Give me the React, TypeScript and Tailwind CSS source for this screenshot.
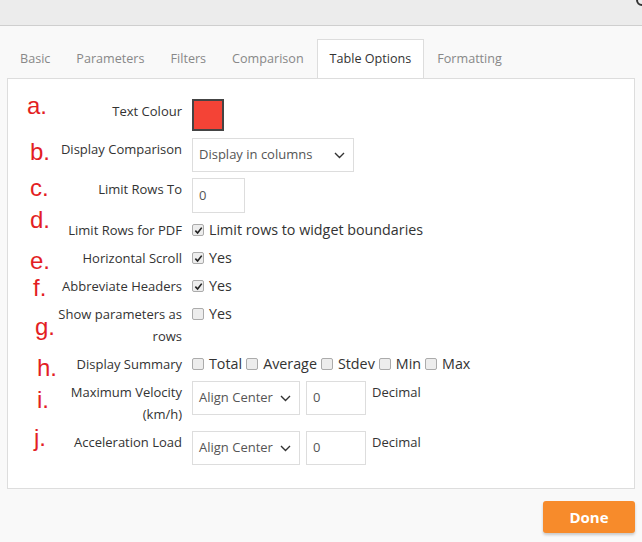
import React from "react";

const Check = ({ checked }: { checked?: boolean }) => (
  <span className="w-[12px] h-[12px] shrink-0 border border-[#ababab] rounded-[2px] bg-[#ededed] flex items-center justify-center">
    {checked && (
      <svg width="9" height="9" viewBox="0 0 10 10">
        <path d="M1.5 5.2 L4 7.8 L8.6 1.8" fill="none" stroke="#222" strokeWidth="1.8" />
      </svg>
    )}
  </span>
);

const Chevron = () => (
  <svg width="11" height="7" viewBox="0 0 11 7">
    <path d="M1 1 L5.5 5.5 L10 1" fill="none" stroke="#333" strokeWidth="1.4" />
  </svg>
);

const Letter = ({ ch, top, left }: { ch: string; top: number; left: number }) => (
  <span
    className="absolute text-[24px] leading-none text-[#e31e24] font-['Liberation_Sans',sans-serif]"
    style={{ top, left }}
  >
    {ch}
  </span>
);

const Row = ({
  letter,
  lTop,
  lLeft,
  label,
  h,
  children,
}: {
  letter: string;
  lTop: number;
  lLeft: number;
  label: React.ReactNode;
  h: string;
  children: React.ReactNode;
}) => (
  <div className={`flex ${h}`}>
    <div className="w-[44px] relative shrink-0">
      <Letter ch={letter} top={lTop} left={lLeft} />
    </div>
    <div className="w-[130px] shrink-0 text-right text-[13px] leading-[22px] text-[#333]">{label}</div>
    <div className="ml-[10px] flex items-start">{children}</div>
  </div>
);

const CheckText = ({ checked, text }: { checked?: boolean; text: string }) => (
  <span className="flex items-center h-[22px]">
    <Check checked={checked} />
    <span className="ml-[5px] text-[14.3px] text-[#333]">{text}</span>
  </span>
);

const AlignSelect = () => (
  <div className="flex items-start">
    <div className="w-[108px] h-[34px] border border-[#ddd] bg-white flex items-center justify-between pl-[6px] pr-[8px] text-[13px] text-[#555]">
      <span>Align Center</span>
      <Chevron />
    </div>
    <div className="ml-[6px] w-[60px] h-[34px] border border-[#ddd] bg-white flex items-center pl-[6px] text-[13px] text-[#555]">0</div>
    <div className="ml-[6px] text-[13px] leading-[22px] text-[#333]">Decimal</div>
  </div>
);

export default function App() {
  const tabs = ["Basic", "Parameters", "Filters", "Comparison", "Table Options", "Formatting"];
  return (
    <div className="w-[642px] h-[542px] bg-[#f9f9f9] relative overflow-hidden font-['Open_Sans',sans-serif]">
      <div className="h-[26px] bg-[#ececec] border-b border-[#cfcfcf] relative">
        <span className="absolute right-[-6px] top-[-6px] w-[12px] h-[12px] rounded-full border-[2px] border-[#333]" />
      </div>
      <div className="mt-[13px] px-[7px] flex relative z-10">
        {tabs.map((t) => {
          const active = t === "Table Options";
          return (
            <div
              key={t}
              className={`h-[39px] px-[12px] flex items-center text-[12.6px] border-x border-t ${
                active ? "bg-white border-[#ddd] text-[#333] mb-[-1px]" : "border-transparent text-[#888]"
              }`}
            >
              {t}
            </div>
          );
        })}
      </div>
      <div className="mx-[7px] h-[411px] border border-[#ddd] bg-white pt-[21px] relative">
        <div className="flex flex-col gap-[6px]">
          <Row letter="a." lTop={-6} lLeft={19} label="Text Colour" h="h-[32px]">
            <div className="w-[32px] h-[32px] border-[2px] border-[#444] bg-[#f44336] -mt-[1px]" />
          </Row>
          <Row letter="b." lTop={2} lLeft={22} label="Display Comparison" h="h-[34px]">
            <div className="w-[162px] h-[34px] border border-[#ddd] bg-white flex items-center justify-between pl-[6px] pr-[8px] text-[13px] text-[#555]">
              <span>Display in columns</span>
              <Chevron />
            </div>
          </Row>
          <Row letter="c." lTop={-2} lLeft={22} label="Limit Rows To" h="h-[35px]">
            <div className="w-[53px] h-[35px] border border-[#ddd] bg-white flex items-center pl-[6px] text-[13px] text-[#555]">0</div>
          </Row>
          <Row letter="d." lTop={-11} lLeft={22} label="Limit Rows for PDF" h="h-[22px]">
            <CheckText checked text="Limit rows to widget boundaries" />
          </Row>
          <Row letter="e." lTop={2} lLeft={22} label="Horizontal Scroll" h="h-[22px]">
            <CheckText checked text="Yes" />
          </Row>
          <Row letter="f." lTop={1} lLeft={25} label="Abbreviate Headers" h="h-[22px]">
            <CheckText checked text="Yes" />
          </Row>
          <Row letter="g." lTop={12} lLeft={27} label="Show parameters as rows" h="h-[44px]">
            <CheckText text="Yes" />
          </Row>
          <Row letter="h." lTop={3} lLeft={29} label="Display Summary" h="h-[22px]">
            <div className="flex items-center h-[22px] text-[14.3px] text-[#333]">
              <Check />
              <span className="ml-[5px] mr-[4px]">Total</span>
              <Check />
              <span className="ml-[5px] mr-[4px]">Average</span>
              <Check />
              <span className="ml-[5px] mr-[4px]">Stdev</span>
              <Check />
              <span className="ml-[5px] mr-[4px]">Min</span>
              <Check />
              <span className="ml-[5px]">Max</span>
            </div>
          </Row>
          <Row letter="i." lTop={7} lLeft={29} label="Maximum Velocity (km/h)" h="h-[44px]">
            <AlignSelect />
          </Row>
          <Row letter="j." lTop={-5} lLeft={26} label="Acceleration Load" h="h-[34px]">
            <AlignSelect />
          </Row>
        </div>
      </div>
      <div className="flex justify-end pr-[7px] pt-[12px]">
        <button className="w-[92px] h-[32px] rounded-[3px] bg-[#f78b2b] text-white font-bold text-[15px] shadow-[0_2px_3px_rgba(0,0,0,0.2)]">
          Done
        </button>
      </div>
    </div>
  );
}
